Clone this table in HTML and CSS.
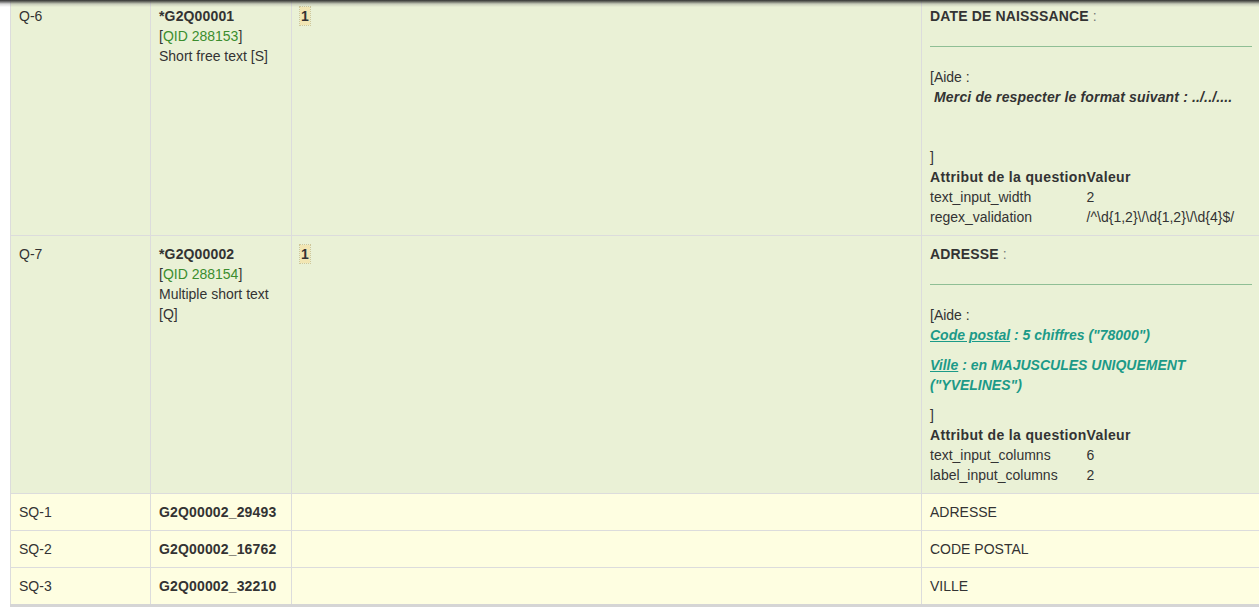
FILE: index.html
```html
<!DOCTYPE html>
<html>
<head>
<meta charset="utf-8">
<link rel="stylesheet" href="styles.css">
</head>
<body>
<div class="topshadow"></div>
<table class="qtable">
  <colgroup>
    <col class="c1"><col class="c2"><col class="c3"><col class="c4">
  </colgroup>
  <tbody>
    <tr class="qrow">
      <td>Q-6</td>
      <td><b>*G2Q00001</b><br>[<span class="qid">QID 288153</span>]<br>Short free text [S]</td>
      <td><span class="badge">1</span></td>
      <td>
        <b>DATE DE NAISSSANCE</b> <span class="muted">:</span>
        <hr class="sep">
        <div>[Aide :</div>
        <p class="para"><b><i>&nbsp;Merci de respecter le format suivant : ../../....</i></b></p>
        <p class="para">&nbsp;</p>
        <div>]</div>
        <table class="attrs">
          <tr><th>Attribut de la question</th><th>Valeur</th></tr>
          <tr><td>text_input_width</td><td>2</td></tr>
          <tr><td>regex_validation</td><td>/^\d{1,2}\/\d{1,2}\/\d{4}$/</td></tr>
        </table>
      </td>
    </tr>
    <tr class="qrow">
      <td>Q-7</td>
      <td><b>*G2Q00002</b><br>[<span class="qid">QID 288154</span>]<br>Multiple short text [Q]</td>
      <td><span class="badge">1</span></td>
      <td>
        <b>ADRESSE</b> <span class="muted">:</span>
        <hr class="sep">
        <div>[Aide :</div>
        <p class="para help"><u>Code postal</u> : 5 chiffres ("78000")</p>
        <p class="para help"><u>Ville</u> : en MAJUSCULES UNIQUEMENT ("YVELINES")</p>
        <div>]</div>
        <table class="attrs">
          <tr><th>Attribut de la question</th><th>Valeur</th></tr>
          <tr><td>text_input_columns</td><td>6</td></tr>
          <tr><td>label_input_columns</td><td>2</td></tr>
        </table>
      </td>
    </tr>
    <tr class="sqrow">
      <td>SQ-1</td><td><b>G2Q00002_29493</b></td><td></td><td>ADRESSE</td>
    </tr>
    <tr class="sqrow">
      <td>SQ-2</td><td><b>G2Q00002_16762</b></td><td></td><td>CODE POSTAL</td>
    </tr>
    <tr class="sqrow">
      <td>SQ-3</td><td><b>G2Q00002_32210</b></td><td></td><td>VILLE</td>
    </tr>
  </tbody>
</table>
</body>
</html>
```

FILE: styles.css
```css
html, body {
  margin: 0;
  padding: 0;
  background: #fff;
  overflow: hidden;
}
body {
  padding-left: 10px;
  font-family: "Liberation Sans", Arial, sans-serif;
  font-size: 14px;
  line-height: 20px;
  color: #333;
}
.topshadow {
  position: fixed;
  top: 0;
  left: 0;
  right: 0;
  height: 7px;
  background: linear-gradient(to bottom, rgba(40,40,40,0.95) 0px, rgba(70,70,70,0.7) 2px, rgba(120,120,120,0.3) 4px, rgba(200,200,200,0) 7px);
  z-index: 5;
}
.qtable {
  border-collapse: collapse;
  width: 1250px;
  margin-top: -3px;
  table-layout: fixed;
  border-bottom: 4px solid #d5d5d5;
}
.c1 { width: 140px; }
.c2 { width: 141px; }
.c3 { width: 630px; }
.c4 { width: 339px; }
.qtable > tbody > tr > td {
  border: 1px solid #dcdcdc;
  padding: 8px;
  vertical-align: top;
}
.qtable b { letter-spacing: 0.15px; }
.qrow > td { background: #eaf1d6; }
.sqrow > td { background: #fefee1; }
.qid { color: #3b8d2e; }
.badge {
  display: inline-block;
  background: #f2e6b3;
  outline: 1px dotted #cfc79a;
  font-weight: bold;
  padding: 0 1px;
  line-height: 18px;
  margin-top: 1px;
}
.muted { color: #777; }
.sep {
  border: 0;
  border-top: 1px solid #8fbf95;
  margin: 20px 0;
  height: 0;
}
.para { margin: 0 0 10px 0; }
.help {
  color: #1c9a88;
  font-weight: bold;
  font-style: italic;
}
.attrs {
  border-collapse: collapse;
}
.attrs th, .attrs td {
  padding: 0;
  text-align: left;
  border: 0;
  vertical-align: top;
}
.attrs th {
  font-weight: bold;
  letter-spacing: 0.35px;
}
```
